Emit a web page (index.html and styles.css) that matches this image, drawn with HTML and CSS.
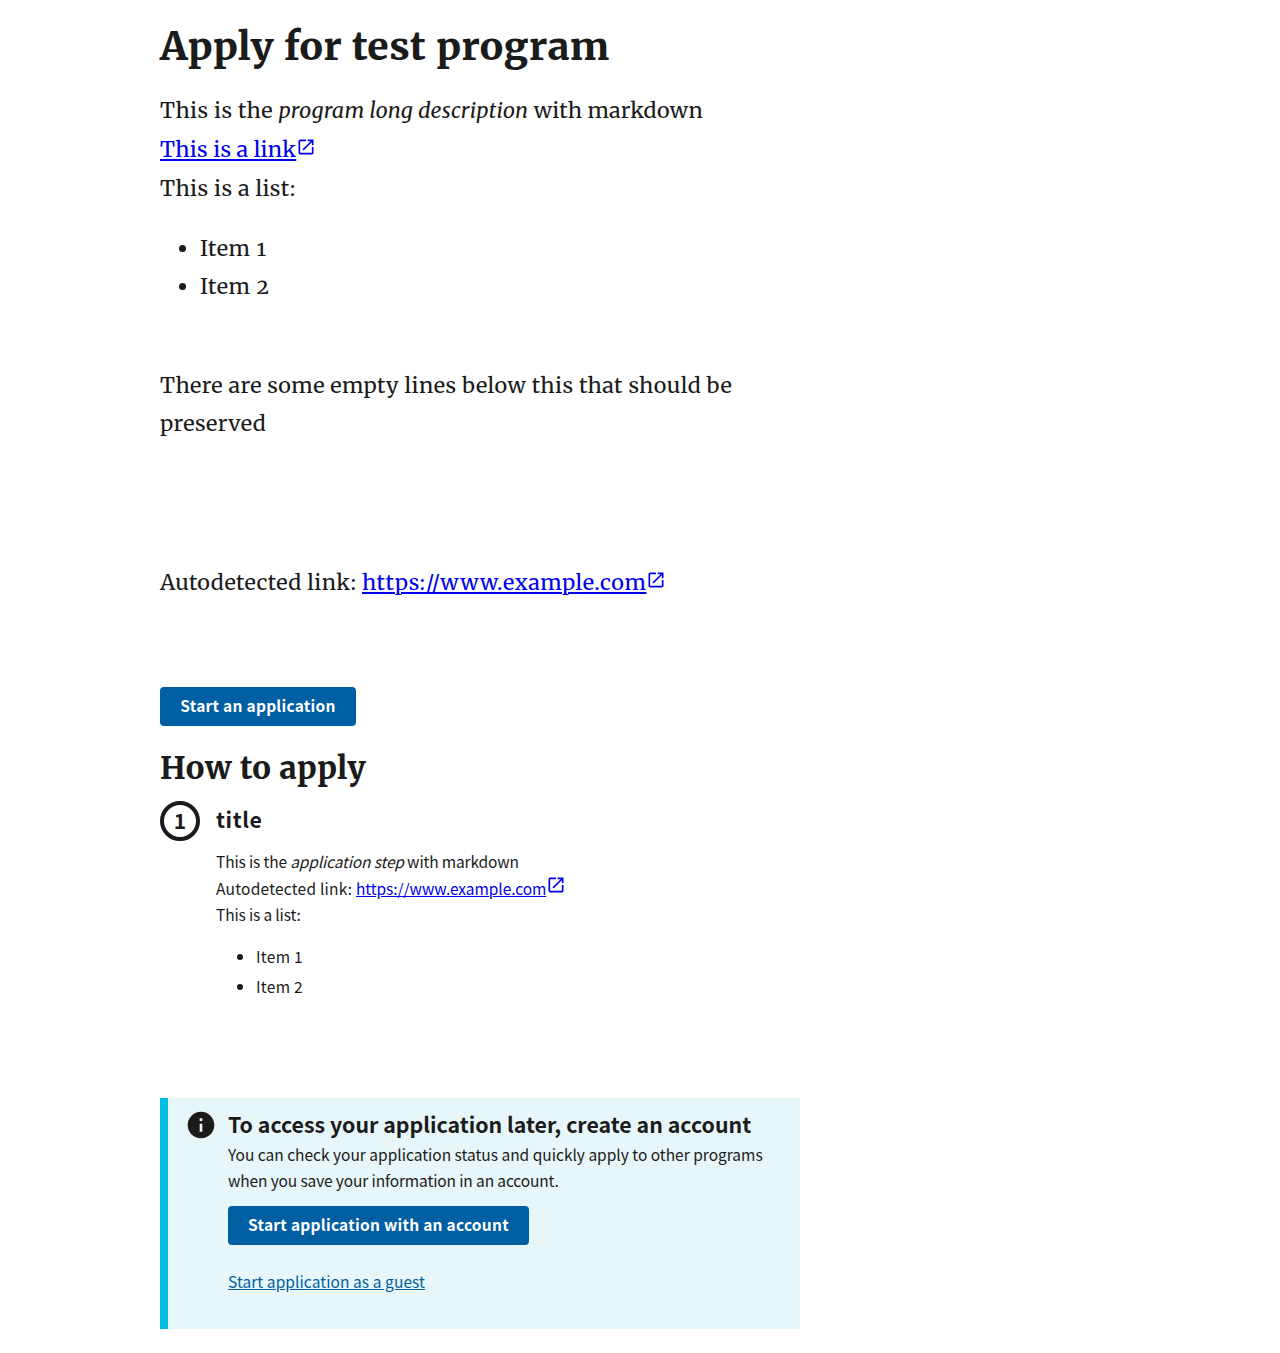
FILE: index.html
```html
<!DOCTYPE html>
<html lang="en">
<head>
<meta charset="utf-8">
<title>Apply for test program</title>
<link rel="stylesheet" href="styles.css">
</head>
<body>
<svg width="0" height="0" class="sprite" aria-hidden="true">
  <symbol id="open" viewBox="0 0 24 24"><path d="M19 19H5V5h7V3H5a2 2 0 0 0-2 2v14a2 2 0 0 0 2 2h14c1.1 0 2-.9 2-2v-7h-2v7zM14 3v2h3.59l-9.83 9.83 1.41 1.41L19 6.41V10h2V3h-7z"/></symbol>
  <symbol id="info" viewBox="0 0 24 24"><path d="M12 2C6.48 2 2 6.48 2 12s4.48 10 10 10 10-4.48 10-10S17.52 2 12 2zm1 15h-2v-6h2v6zm0-8h-2V7h2v2z"/></symbol>
</svg>
<main class="page">
  <h1 class="page-title">Apply for test program</h1>
  <section class="intro">
    <p>This is the <em>program long description</em> <span class="tail">with markdown</span></p>
    <p class="intro-link"><a href="#">This is a link</a><svg class="open-icon"><use href="#open"/></svg></p>
    <p>This is a list:</p>
    <ul>
      <li>Item 1</li>
      <li>Item 2</li>
    </ul>
    <p class="notice">There are some empty lines below this that should be<br>preserved</p>
    <p class="autolink">Autodetected link: <a href="#">https://www.example.com</a><svg class="open-icon"><use href="#open"/></svg></p>
  </section>
  <button class="button">Start an application</button>
  <h2 class="section-title">How to apply</h2>
  <section class="step">
    <div class="step-number">1</div>
    <div class="step-body">
      <h3 class="step-title">title</h3>
      <p>This is the <em>application step</em> with markdown</p>
      <p><span class="link-label">Autodetected link: </span><a href="#">https://www.example.com</a><svg class="open-icon"><use href="#open"/></svg></p>
      <p>This is a list:</p>
      <ul>
        <li>Item 1</li>
        <li>Item 2</li>
      </ul>
    </div>
  </section>
  <section class="alert">
    <svg class="info-icon"><use href="#info"/></svg>
    <div class="alert-body">
      <h3 class="alert-title">To access your application later, create an account</h3>
      <p>You can check your application status and quickly apply to other programs<br><span class="tight">when you save your information in an account.</span></p>
      <button class="button">Start application with an account</button>
      <a href="#" class="guest">Start application as a guest</a>
    </div>
  </section>
</main>
</body>
</html>
```
FILE: styles.css
```css
* { box-sizing: border-box; }
body {
  margin: 0;
  background: #fff;
  color: #1b1b1b;
  font-family: "Source Sans Pro", "Noto Sans CJK SC", sans-serif;
  font-size: 15.5px;
}
h1, h2, h3, p, ul { margin: 0; }
p { white-space: nowrap; }
a { color: #00e; }
svg { fill: currentColor; }
.sprite { position: absolute; }
.page { width: 640px; margin-left: 160px; padding-top: 21px; }
.page-title, .section-title, .intro {
  font-family: Merriweather, "Noto Serif", "DejaVu Serif Condensed", "DejaVu Serif", serif;
  font-variant-numeric: oldstyle-nums;
}
.page-title { font-size: 39px; font-weight: 800; line-height: 52px; letter-spacing: 0.45px; white-space: nowrap; }
.intro {
  height: 613px;
  padding-top: 18px;
  font-size: 21.6px;
  line-height: 39px;
  letter-spacing: 0.4px;
}
.intro em { letter-spacing: 0.17px; }
.intro .tail { letter-spacing: 0.18px; }
.intro-link a { letter-spacing: 0.23px; }
.intro ul { margin-top: 22px; padding-left: 40px; line-height: 38px; letter-spacing: 0.65px; }
.notice { margin-top: 61px; line-height: 38px; }
.autolink { margin-top: 120px; }
.autolink a { letter-spacing: 0.56px; }
.open-icon { width: 20px; height: 20px; color: #00e; vertical-align: 0; }
.button {
  display: block;
  height: 39px;
  padding: 0 0 2px;
  border: 0;
  border-radius: 4px;
  background: #005ea2;
  color: #fff;
  font: bold 15.5px/37px "Source Sans Pro", "Noto Sans CJK SC", sans-serif;
  letter-spacing: 0.25px;
  white-space: nowrap;
}
.intro + .button { margin-top: 1px; width: 196px; }
.section-title { margin-top: 21px; font-size: 31px; font-weight: 800; line-height: 42px; letter-spacing: 0.5px; }
.step { display: flex; gap: 16px; margin-top: 12px; height: 297px; }
.step-number {
  width: 40px;
  height: 40px;
  border: 4px solid #1b1b1b;
  border-radius: 50%;
  text-align: center;
  font-size: 21px;
  font-weight: bold;
  line-height: 31px;
}
.step-title { font-size: 21.3px; line-height: 35px; letter-spacing: 0.6px; margin-bottom: 12px; }
.step p { height: 26.5px; line-height: 26.5px; letter-spacing: -0.15px; }
.step .link-label { letter-spacing: 0.23px; }
.step a { letter-spacing: -0.07px; }
.step .open-icon { vertical-align: 0; }
.step ul { margin-top: 13px; padding-left: 40px; line-height: 30px; letter-spacing: 0.3px; }
.alert {
  display: flex;
  gap: 11px;
  height: 231px;
  padding: 11px 0 0 17px;
  border-left: 8px solid #00bde3;
  background: #e7f6f8;
}
.info-icon { width: 32px; height: 32px; }
.alert-title { font-size: 21.35px; line-height: 30px; margin-bottom: 2px; white-space: nowrap; }
.alert p { line-height: 26px; }
.alert .tight { letter-spacing: -0.13px; }
.alert .button { margin-top: 13px; width: 301px; }
.guest { display: block; width: max-content; margin-top: 23px; line-height: 26px; letter-spacing: 0.08px; color: #005ea2; }
```
